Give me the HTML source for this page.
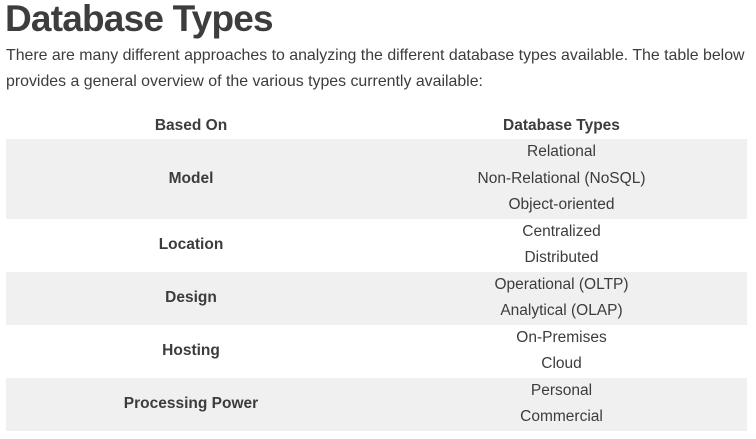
<!DOCTYPE html>
<html><head><style>
body{margin:0;background:#fff;font-family:"Liberation Sans",sans-serif;color:#3c3c3c;width:756px;height:439px;overflow:hidden}
h1{position:absolute;left:5px;top:-2px;margin:0;font-size:37px;font-weight:bold;color:#3d3d3d;letter-spacing:-0.8px}
p{position:absolute;left:6px;top:43px;margin:0;width:750px;font-size:15.9px;line-height:26px;color:#3c3c3c}
table{position:absolute;left:6px;top:112px;width:741px;border-collapse:collapse;font-size:15.5px;color:#3c3c3c}
td,th{text-align:center;padding:0;vertical-align:middle}
th{height:27px;font-weight:bold}
td.l{width:370px;font-weight:bold}
td.r div{height:26.5px;line-height:26.5px}
tr.g{background:#f0f0f0}
</style></head><body>
<h1>Database Types</h1>
<p>There are many different approaches to analyzing the different database types available. The table below provides a general overview of the various types currently available:</p>
<table>
<tr><th>Based On</th><th>Database Types</th></tr>
<tr class="g"><td class="l">Model</td><td class="r"><div>Relational</div><div>Non-Relational (NoSQL)</div><div>Object-oriented</div></td></tr>
<tr><td class="l">Location</td><td class="r"><div>Centralized</div><div>Distributed</div></td></tr>
<tr class="g"><td class="l">Design</td><td class="r"><div>Operational (OLTP)</div><div>Analytical (OLAP)</div></td></tr>
<tr><td class="l">Hosting</td><td class="r"><div>On-Premises</div><div>Cloud</div></td></tr>
<tr class="g"><td class="l">Processing Power</td><td class="r"><div>Personal</div><div>Commercial</div></td></tr>
</table>
</body></html>
